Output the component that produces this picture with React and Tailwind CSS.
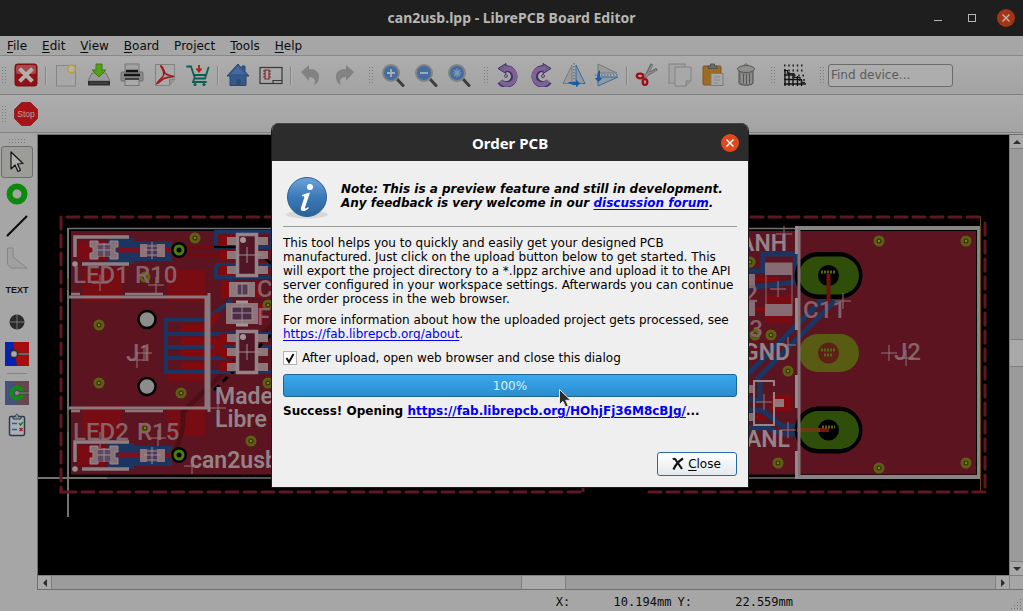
import React from "react";

/* ---------- toolbar icons (24 x 24) ---------- */

function Svg({ children, size = "size-6" }) {
  return (
    <svg viewBox="0 0 24 24" className={`${size} shrink-0`} fill="none" aria-hidden="true">
      {children}
    </svg>
  );
}

const icons = {
  close: (
    <>
      <rect x="1" y="1" width="22" height="22" rx="2.5" fill="#8f1015" stroke="#7a0c10" />
      <rect x="2" y="2" width="20" height="9" rx="2" fill="#a5494c" />
      <path d="M7 7l10 10M17 7L7 17" stroke="#b4aeae" strokeWidth="4" strokeLinecap="square" />
    </>
  ),
  create: (
    <>
      <rect x="2.5" y="2.5" width="19" height="20.5" fill="#a8a8a6" stroke="#868686" />
      <circle cx="17.5" cy="6" r="4" fill="#b5b08a" stroke="#b3a13c" strokeWidth="1.5" />
      <circle cx="17.5" cy="6" r="2" fill="#b6b6ae" />
    </>
  ),
  save: (
    <>
      <path d="M5 10h14l4 8H1z" fill="#9b9b9b" stroke="#777" />
      <path d="M1 18h22v4.5H1z" fill="#2c2f30" />
      <path d="M3 20h18" stroke="#4a4d4e" />
      <path d="M9 1h6v6h4l-7 7-7-7h4z" fill="#55a018" stroke="#3d7d10" />
    </>
  ),
  print: (
    <>
      <rect x="5" y="1" width="14" height="9" fill="#a3a3a3" stroke="#777" />
      <rect x="1" y="9" width="22" height="9" rx="1" fill="#8a8a8a" stroke="#6c6c6c" />
      <path d="M6 8h12M4 12h16" stroke="#141414" strokeWidth="2.500" />
      <rect x="5" y="15" width="14" height="7.500" fill="#aaa" stroke="#777" />
      <path d="M5 16h14" stroke="#222" strokeWidth="1.5" />
    </>
  ),
  pdf: (
    <>
      <path d="M2.500 1.500h19v15l-5 6h-14z" fill="#a9a9a9" stroke="#808080" />
      <path d="M21.500 16.500h-5v6" fill="#959595" stroke="#808080" />
      <path d="M7.500 2.500c3 2 3 5 4.500 7.500 2 2.500 5 2.500 9 3.500-3 .5-7 .5-10 2s-4 4-7 5c1-3 5-5 6.500-8 1-3-1-7-3-10z" stroke="#a01a1c" strokeWidth="1.600" />
    </>
  ),
  cart: (
    <>
      <path d="M1 3.500h4l4 12h10l3.500-11M8 12h11M8 16l-1 3h13" stroke="#0b5f55" strokeWidth="1.800" strokeLinecap="round" />
      <circle cx="9" cy="21.500" r="1.600" fill="#0b5f55" />
      <circle cx="18" cy="21.500" r="1.600" fill="#0b5f55" />
      <path d="M13 2v6M10.500 5.500L13 8.500l2.500-3" stroke="#a12313" strokeWidth="1.800" />
    </>
  ),
  home: (
    <>
      <path d="M12 1L1 13h3v9.500h16V13h3l-4-4.500V3h-3v2.500z" fill="#35598a" stroke="#27486f" />
      <path d="M12 3L5 11h14z" fill="#44699b" />
      <path d="M10.500 16h4v6.500h-4z" fill="#2b4c78" />
    </>
  ),
  board: (
    <>
      <rect x="1" y="4.500" width="22" height="16" stroke="#383838" strokeWidth="1.200" />
      <path d="M14 20.500v-3h9" stroke="#383838" strokeWidth="1.200" />
      <path d="M6 7h4v9H6zM4 8h2M4 11h2M4 14h2M10 8h2M10 11h2M10 14h2" stroke="#7c2b2b" strokeWidth="1.200" />
    </>
  ),
  undo: <path d="M2 9l8-7v4c7 0 10 3 10 8 0 4-2 7-5 8 2-4 1-8-5-8v4z" fill="#828282" />,
  redo: <path d="M22 9l-8-7v4C7 6 4 9 4 14c0 4 2 7 5 8-2-4-1-8 5-8v4z" fill="#828282" />,
  rotateLeft: (
    <>
      <path d="M9 5.500a8 8 0 1 1-5 13" stroke="#3f3162" strokeWidth="6.500" />
      <path d="M2 5.500L10 .5v10z" fill="#6f6188" stroke="#3f3162" />
      <path d="M8 5.500h2a8 8 0 1 1-5.300 12.700" stroke="#7a6894" strokeWidth="4.500" />
      <path d="M9 5.500a8 8 0 1 1-4.500 12.500" stroke="#9a45a4" strokeWidth="1.200" strokeDasharray="1 1.500" />
      <circle cx="10" cy="13" r="1.500" fill="#a6a6a6" stroke="#5a3a7a" />
    </>
  ),
  rotateRight: (
    <>
      <path d="M15 5.500a8 8 0 1 0 5 13" stroke="#3f3162" strokeWidth="6.500" />
      <path d="M22 5.500L14 .5v10z" fill="#6f6188" stroke="#3f3162" />
      <path d="M16 5.500h-2a8 8 0 1 0 5.300 12.700" stroke="#7a6894" strokeWidth="4.500" />
      <path d="M15 5.500a8 8 0 1 0 4.500 12.500" stroke="#9a45a4" strokeWidth="1.200" strokeDasharray="1 1.500" />
      <circle cx="14" cy="13" r="1.500" fill="#a6a6a6" stroke="#5a3a7a" />
    </>
  ),
  flipH: (
    <>
      <path d="M10 2L1 20.500h9z" fill="#9b9b9b" stroke="#7a7a7a" />
      <path d="M14 2l9 18.500h-9z" fill="#8f9aa4" stroke="#3a6a9c" />
      <path d="M12 0v24" stroke="#2b62a0" strokeDasharray="1.500 1.500" />
      <path d="M6 19h8v-2.500l4 4-4 4V22C10 22 7 21 6 19z" fill="#1e5ba4" />
    </>
  ),
  flipV: (
    <>
      <path d="M3 10V1l19 9z" fill="#9b9b9b" stroke="#7a7a7a" />
      <path d="M3 14v9l20-9z" fill="#8f9aa4" stroke="#3a6a9c" />
      <path d="M0 12h24" stroke="#2b62a0" strokeDasharray="1.500 1.500" />
      <path d="M5 7v8h2.500l-4 4-4-4H2C2 11 3 8 5 7z" fill="#1e5ba4" />
    </>
  ),
  cut: (
    <>
      <path d="M17 1l-7 14M22 6L8 14" stroke="#6a6c6a" strokeWidth="3" />
      <path d="M17 2l-6 12M21 7L9 13" stroke="#979997" />
      <ellipse cx="5" cy="13" rx="3.200" ry="2.300" stroke="#9c1014" strokeWidth="2.300" />
      <ellipse cx="10" cy="19" rx="2.300" ry="2.800" stroke="#9c1014" strokeWidth="2.300" />
    </>
  ),
  copy: (
    <>
      <rect x="1" y="1" width="16" height="19" fill="#a4a4a4" stroke="#828282" />
      <path d="M7 4h16v14l-5 5H7z" fill="#a8a8a8" stroke="#828282" />
      <path d="M23 18h-5v5" fill="#989898" stroke="#808080" />
    </>
  ),
  paste: (
    <>
      <rect x="2" y="3" width="18" height="19" rx="1" fill="#9d6c22" stroke="#80571a" />
      <path d="M7 5.500V3h2.500V1h4v2H16v2.500z" fill="#686a68" stroke="#555" />
      <path d="M10 10.500h12v12H10z" fill="#a6a6a4" stroke="#7c7c7c" />
      <path d="M13 14h6M13 17h6M13 20h4" stroke="#888" />
    </>
  ),
  trash: (
    <>
      <path d="M5 7h14v13c0 3-14 3-14 0z" fill="#7b7c7a" stroke="#535452" />
      <ellipse cx="12" cy="6" rx="8.500" ry="3.500" fill="#8f908e" stroke="#5b5c5a" />
      <path d="M10 2.500c0-2 4-2 4 0" stroke="#5b5c5a" />
      <path d="M8 11v9M11 12v9M14 12v9M17 11v9" stroke="#a0a19f" />
      <path d="M9.500 11v9M12.500 12v9M15.500 11v9" stroke="#565755" />
    </>
  ),
  grid: (
    <>
      <path d="M1 2.500h21M1 7.500h21M11 12.500h11M16 17h6" stroke="#1e1e1e" strokeWidth="1.800" strokeDasharray="1.500 2.750" />
      <path d="M1 7.500h3.500v3H11v4h6v2h1.500v3H22" stroke="#161616" strokeWidth="1.200" />
      <path d="M2 6v17M6 9v14M10 11v12M14.500 13v10M18.500 17v6M1 12h9M1 16.500h15M1 21h22" stroke="#141414" strokeWidth="1.400" />
    </>
  ),
  stop: (
    <>
      <path d="M7.500 .5h9l7 7v9l-7 7h-9l-7-7v-9z" fill="#a81317" stroke="#8a2a2c" />
      <text x="12" y="15" textAnchor="middle" fontSize="8.500" fill="#b9a3a3" fontFamily="Liberation Sans, sans-serif">Stop</text>
    </>
  ),
};

function Lens({ kind }) {
  return (
    <>
      <path d="M16 16l6 6.500" stroke="#3c3e3c" strokeWidth="3" strokeLinecap="round" />
      <circle cx="10" cy="10" r="8" fill="#446c9f" stroke="#828482" strokeWidth="2" />
      {kind === "in" && <path d="M10 6v8M6 10h8" stroke="#a6b0bb" strokeWidth="1.800" />}
      {kind === "out" && <path d="M6 10h8" stroke="#a6b0bb" strokeWidth="1.800" />}
      {kind === "fit" && <path d="M10 5.500v9M5.500 10h9M7 7l6 6M13 7l-6 6" stroke="#7f99b8" strokeWidth="1.200" />}
    </>
  );
}
icons.zoomIn = <Lens kind="in" />;
icons.zoomOut = <Lens kind="out" />;
icons.zoomFit = <Lens kind="fit" />;

const sideIcons = {
  select: <path d="M6 2v17l4-4 3 6.500 2.500-1.200-3-6.300 5.500-.5z" fill="#b0b0b0" stroke="#141414" strokeWidth="1.200" strokeLinejoin="round" />,
  pad: <circle cx="12" cy="12" r="7.500" stroke="#0d8a0d" strokeWidth="6" />,
  line: <path d="M2.500 21.500L21.500 2.500" stroke="#0a0a0a" strokeWidth="2" strokeLinecap="round" />,
  polygon: <path d="M2.500 2h5.500v9l14 11H6l-3.500-4z" fill="#a0a0a0" stroke="#868686" />,
  text: (
    <text x="12" y="15" textAnchor="middle" fontSize="9" fontWeight="700" fill="#151515" fontFamily="Liberation Sans, sans-serif">TEXT</text>
  ),
  hole: (
    <>
      <circle cx="12" cy="12" r="7.500" fill="#2b2b2b" />
      <path d="M12 4v16M4 12h16" stroke="#777" />
    </>
  ),
  plane: (
    <>
      <path d="M0 0h24v24H0z" fill="#a60d0d" />
      <path d="M0 0h8l4 24H0z" fill="#0822b0" />
      <path d="M12 12h12" stroke="#333" strokeWidth="2.500" />
      <path d="M12 12h12" stroke="#999" />
      <circle cx="9" cy="12" r="4" fill="#6c6c6c" stroke="#222" />
      <circle cx="9" cy="12" r="2.500" fill="#a9a9a9" />
    </>
  ),
  ratsnest: (
    <>
      <path d="M0 0h24v24H0z" fill="#65484f" />
      <path d="M0 0h9l3 24H0z" fill="#46507c" />
      <circle cx="12" cy="12" r="5.500" stroke="#128a16" strokeWidth="4" />
      <path d="M12 12h12" stroke="#333" strokeWidth="2.500" />
      <path d="M12 12h12" stroke="#999" />
      <circle cx="12" cy="12" r="2" fill="#8c8c8c" />
    </>
  ),
  check: (
    <>
      <rect x="4.500" y="3.500" width="15" height="19" rx="1.500" fill="#acb0b2" stroke="#2c3a48" strokeWidth="1.500" />
      <path d="M8 3.500h2.500c0-3 3-3 3 0H16v2.500H8z" fill="#8a8f94" stroke="#2c3a48" />
      <path d="M7 10.500h5M7 16.500h5" stroke="#1c62a8" strokeWidth="1.500" />
      <path d="M14 10l1.500 2 2.500-3" stroke="#1f7d2e" strokeWidth="1.400" />
      <path d="M14.500 15l3 3M17.500 15l-3 3" stroke="#a01a2c" strokeWidth="1.400" />
    </>
  ),
};

/* ---------- small pieces ---------- */

function Handle() {
  return (
    <svg viewBox="0 0 9 18" className="h-[18px] w-[9px] shrink-0" aria-hidden="true">
      <path d="M2.500 1v17M5.500 1v17" stroke="#7a7a7a" strokeDasharray="1 2" />
    </svg>
  );
}

function Divider() {
  return (
    <div className="flex w-[7px] shrink-0 justify-center">
      <div className="h-[19px] w-px bg-[#858585]" />
      <div className="h-[19px] w-px bg-[#b4b4b4]" />
    </div>
  );
}

function Tool({ icon, label, disabled }) {
  return (
    <button type="button" aria-label={label} disabled={disabled} className="flex h-9 w-[33px] shrink-0 items-center justify-center">
      <Svg>{icons[icon]}</Svg>
    </button>
  );
}

const menus = [
  ["F", "ile"],
  ["E", "dit"],
  ["V", "iew"],
  ["B", "oard"],
  ["", "Project"],
  ["T", "ools"],
  ["H", "elp"],
];

function CloseCross({ tone }) {
  return (
    <svg viewBox="0 0 18 18" className="size-[18px]" aria-hidden="true">
      <circle cx="9" cy="9" r="9" className={tone === "dim" ? "fill-[#a33414]" : "fill-[#e2481d]"} />
      <path d="M5.500 5.500l7 7M12.500 5.500l-7 7" className={tone === "dim" ? "stroke-[#bcb0ac]" : "stroke-white"} strokeWidth="1.500" />
    </svg>
  );
}

/* ---------- board drawing ---------- */

const vias = [
  [195, 238], [99, 325], [99, 383], [145, 277], [145, 428], [181, 393], [251, 441], [268, 305], [268, 383],
  [879, 241], [966, 241], [755, 335], [771, 335], [788, 371], [778, 463], [879, 468], [966, 463], [750, 262],
];
const crosses = [
  [100, 283], [156, 285], [137, 360], [144, 353], [218, 408], [192, 466], [158, 438], [100, 440], [784, 234],
  [843, 301], [778, 289], [788, 345], [889, 353], [906, 358], [788, 430], [764, 402],
];

function Silk({ x, y, bold, anchor, children }) {
  return (
    <text
      x={x}
      y={y}
      fontSize={bold ? 23 : 24}
      fontWeight={bold ? 600 : 500}
      textAnchor={anchor || "start"}
      fill={bold ? "#938388" : "#876068"}
      fontFamily="Roboto, sans-serif"
    >
      {children}
    </text>
  );
}

function LedRow({ dy }) {
  return (
    <g transform={`translate(0 ${dy})`}>
      <rect x="78" y="241" width="32" height="19" fill="#7a0b12" />
      <path d="M108 238h26v3h38v20h-38v3h-26z" fill="#1c3560" />
      <path d="M118 250h24M165 250h10" stroke="#7c1020" strokeWidth="5" />
      <path d="M90 241h8v3h12v-3h8v6h-3v6h3v6h-8v-3H98v3h-8v-6h3v-6h-3z" fill="#857277" stroke="#9b888c" />
      <path d="M98 245h12v11H98z" fill="#5d4a60" />
      <path d="M140 244h25v13h-25z" fill="#8e7478" />
      <path d="M147 244h10v13h-10z" fill="#4b3a5b" />
      <path d="M147 246h10M147 255h10M152 242v17M144 250h17M104 243v14M97 250h14" stroke="#9d8d92" />
      <path d="M75 257v-20h54M82 264h47" stroke="#8f7f83" strokeWidth="3.500" fill="none" />
      <circle cx="75" cy="264" r="2.800" fill="#9c8d90" />
      <circle cx="179" cy="250" r="8" fill="#000" />
      <circle cx="179" cy="250" r="4" fill="none" stroke="#4d7c12" strokeWidth="3" />
    </g>
  );
}

function Sot({ y }) {
  return (
    <g transform={`translate(0 ${y})`}>
      {[8, 22, 37].map((p) => (
        <g key={p}>
          <rect x="220" y={p - 5} width="15" height="10" fill="#84090d" />
          <rect x="227" y={p - 4} width="10" height="8" fill="#8d7679" />
          <rect x="257" y={p - 4} width="11" height="8" fill="#8d7679" />
        </g>
      ))}
      <rect x="237.500" y="1.500" width="19" height="41" fill="#511626" stroke="#968389" strokeWidth="3.500" />
      <path d="M247 14v16M238 22h24" stroke="#9b8b8f" />
      <circle cx="243" cy="7" r="3" fill="#a19497" />
    </g>
  );
}

function BoardCanvas() {
  return (
    <svg
      viewBox="38 135 971 440"
      preserveAspectRatio="xMidYMid slice"
      className="absolute inset-0 h-full w-full"
      role="img"
      aria-label="Board layout"
      fill="none"
    >
      <rect x="71" y="231" width="905" height="243.500" fill="#5c1520" />

      {/* copper: left half */}
      <g fill="#770c12">
        <rect x="83" y="270" width="39" height="31" />
        <rect x="167" y="270" width="38" height="31" />
        <rect x="83" y="406" width="39" height="30" />
        <rect x="167" y="406" width="38" height="30" />
        <rect x="168" y="374" width="37" height="7" />
      </g>
      <path d="M175 456l8-30v-14l80-78M183 412l90-88" stroke="#4c0f18" strokeWidth="5" />
      <path d="M187 248h50M187 255h50" stroke="#6f0c13" strokeWidth="4" />
      <path d="M214 247h58M214 232h58v16M216 248v-14M216 265v12h56M216 265h56M232 278l-2 24-26 18h-38v52h106M166 334h60M166 347h106M166 358h60M226 334h46" stroke="#1c3560" strokeWidth="4" />
      <path d="M184 328h22l10-12M184 341h30M184 353h30l8-12M184 366h22" stroke="#84090d" strokeWidth="7" strokeLinecap="round" />
      <path d="M214 247h24M244 240l30 26" stroke="#000" strokeWidth="2.500" />
      <path d="M214 390l60-58" stroke="#000" strokeWidth="3" strokeDasharray="7 5" />

      {/* parts next to the dialog's left edge */}
      <rect x="221" y="281" width="40" height="17" fill="#84090d" />
      <rect x="229" y="282" width="26" height="15" fill="#8f787c" />
      <rect x="237" y="284" width="11" height="11" fill="#563b54" stroke="#9b8b8f" />
      <rect x="226" y="303" width="38" height="21" fill="#84090d" />
      <path d="M226 303h32v21h-32z" fill="#8d7579" />
      <path d="M232 307h20v13h-20z" fill="#4d2c48" stroke="#9b8b8f" />
      <path d="M236 302h12M236 325h12" stroke="#a39499" strokeWidth="3" />
      <path d="M242 304v19M232 313h20M242 282v15" stroke="#9b8b8f" />
      <Sot y={233} />
      <Sot y={330} />

      <LedRow dy={0} />
      <LedRow dy={205} />

      {/* J1 outline */}
      <path d="M68 297h138v111H68M209 293v119" stroke="#8c777c" strokeWidth="3" />
      <path d="M71 294h9M125 294h38M71 411h9M125 411h38" stroke="#8c777c" strokeWidth="2.500" />
      {[319.5, 386.5].map((y) => (
        <circle key={y} cx="147" cy={y} r="8.500" fill="#8c8c8c" stroke="#000" strokeWidth="2.500" />
      ))}

      {/* copper: right half */}
      <path d="M748 271h15v-17h33v30M748 288l48-6M748 374l48-48 28-28M756 380l80-80M760 380v20h-12M748 410h14l20 16h20M748 428h20l14 6h18" stroke="#1c3560" strokeWidth="5" />
      <rect x="765" y="295" width="27" height="28" fill="#780c12" />
      <path d="M748 279h30M748 309h17M748 418h18" stroke="#84090d" strokeWidth="4" />
      <rect x="771" y="395" width="20" height="16" fill="#84090d" />
      <rect x="774" y="399" width="10" height="8" fill="#94757a" />
      <rect x="766" y="263" width="26" height="52" stroke="#8a6a72" />
      <rect x="765" y="263" width="27" height="12" fill="#876c73" />
      <rect x="765" y="304" width="27" height="12" fill="#876c73" />
      <rect x="748" y="274" width="7" height="14" fill="#876c73" />
      <rect x="748" y="302" width="7" height="14" fill="#876c73" />
      <rect x="748" y="385" width="6" height="8" fill="#876c73" />
      <rect x="748" y="413" width="6" height="8" fill="#876c73" />
      <path d="M774 386v-5h-20v44h20v-33" stroke="#958589" strokeWidth="2" />

      {/* J2 pads */}
      {[275.5, 430].map((y) => (
        <g key={y}>
          <rect x="794.500" y={y - 23.5} width="68" height="47" rx="23.500" fill="#000" />
          <rect x="799" y={y - 19} width="60" height="38" rx="19" fill="#2f4e09" />
          <circle cx="828.500" cy={y} r="10.500" fill="#000" />
        </g>
      ))}
      <rect x="799" y="334" width="60" height="38" rx="19" fill="#575c12" />
      <circle cx="828.500" cy="353" r="10.500" fill="#5c2018" />
      <path d="M828.500 274v27" stroke="#6f1410" strokeWidth="4" />
      <path d="M797 430h32" stroke="#6a3a12" strokeWidth="4" />
      <path d="M820 430h9" stroke="#7a1010" strokeWidth="4" />
      <path d="M821 272h15M821 350h15M824 355h9M822 427h13" stroke="#53690f" strokeWidth="3" strokeDasharray="2 1" />

      {/* vias */}
      {vias.map(([x, y]) => (
        <g key={`${x}-${y}`}>
          <circle cx={x} cy={y} r="4" fill="#47290f" stroke="#5c6012" strokeWidth="3" />
          <circle cx={x} cy={y} r="1.200" fill="#758a12" />
        </g>
      ))}

      {/* silkscreen texts */}
      <Silk x={73} y={283}>LED1</Silk>
      <Silk x={135} y={283}>R10</Silk>
      <Silk x={73} y={440}>LED2</Silk>
      <Silk x={137} y={440}>R15</Silk>
      <Silk x={126} y={361}>J1</Silk>
      <Silk x={257} y={297}>C</Silk>
      <Silk x={257} y={325}>F</Silk>
      <Silk x={803} y={318}>C11</Silk>
      <Silk x={894} y={360}>J2</Silk>
      <Silk x={758} y={302} anchor="end">2</Silk>
      <Silk x={763} y={337} anchor="end">3</Silk>
      <Silk x={215} y={404} bold>Made</Silk>
      <Silk x={215} y={427} bold>Libre</Silk>
      <Silk x={190} y={468} bold>can2usb</Silk>
      <Silk x={787} y={251} anchor="end" bold>ANH</Silk>
      <Silk x={790} y={360} anchor="end" bold>GND</Silk>
      <Silk x={790} y={447} anchor="end" bold>ANL</Silk>

      {/* origin crosses */}
      {crosses.map(([x, y]) => (
        <path key={`${x}-${y}`} d={`M${x - 8} ${y}h16M${x} ${y - 8}v16`} stroke="#8f7479" />
      ))}

      {/* board outline, origin lines */}
      <path d="M69 228.500h911M978.500 226v252M107 478h873" stroke="#6f6f6f" strokeWidth="1.500" />
      <path d="M68 228v289M38 478h69" stroke="#727272" strokeWidth="2" />
      <path d="M796 228h183v249H796" stroke="#858585" strokeWidth="4" />
      <path d="M799 229v247" stroke="#867278" strokeWidth="3" />
      <path d="M796.500 226v28M796.500 298v32M796.500 375v33M796.500 451v28" stroke="#938a8d" strokeWidth="3" />
      <path d="M68 278v12M68 410v22M980.500 216v275" stroke="#6a4310" />

      {/* clearance outline */}
      <g stroke="#5f1722" strokeWidth="3" strokeLinecap="round" strokeDasharray="12 6">
        <path d="M67 217h918" />
        <path d="M61 217v275" />
        <path d="M985 223v269" />
        <path d="M64 492h519" />
        <path d="M649 492h336" />
      </g>
      <path d="M583 492v-5M61 488v4h4" stroke="#5f1722" strokeWidth="3" />
    </svg>
  );
}

/* ---------- scroll bars ---------- */

function Arrow({ d, label }) {
  return (
    <button type="button" aria-label={label} className="flex size-[13px] shrink-0 items-center justify-center bg-[#a9a9a9]">
      <svg viewBox="0 0 8 8" className="size-2" aria-hidden="true">
        <path d={d} fill="#2e2e2e" />
      </svg>
    </button>
  );
}

/* ---------- dialog ---------- */

function OrderDialog() {
  return (
    <div className="fixed inset-0 flex items-start justify-center pt-[123px] pr-[3px]">
      <section
        role="dialog"
        aria-labelledby="order-title"
        className="relative w-[478px] overflow-hidden rounded-t-lg border border-t-0 border-[#1b1b1b] bg-[#efefef] text-black"
      >
        <header className="grid h-[38px] grid-cols-[1fr_auto_1fr] items-center border-t border-[#444] bg-[#2c2c2c] px-[9px]">
          <h2 id="order-title" className="col-start-2 font-['Noto_Sans',sans-serif] text-[15px] font-bold text-white">
            Order PCB
          </h2>
          <button type="button" aria-label="Close dialog" className="justify-self-end">
            <CloseCross />
          </button>
        </header>

        <div className="px-[11px] pb-[11px] leading-[14px]">
          <div className="flex h-[66px] items-center gap-3 border-b border-[#9a9a9a] pt-1">
            <svg viewBox="0 0 46 46" className="size-[46px] shrink-0" aria-hidden="true">
              <defs>
                <linearGradient id="info" x1="0" y1="0" x2="0" y2="1">
                  <stop offset="0" stopColor="#6ea3dc" />
                  <stop offset="0.5" stopColor="#3b7ab8" />
                  <stop offset="1" stopColor="#2b6296" />
                </linearGradient>
              </defs>
              <ellipse cx="24" cy="41.500" rx="21" ry="4" fill="#d8d8d8" />
              <g transform="translate(0 2)">
                <circle cx="24" cy="22" r="19.500" fill="url(#info)" stroke="#2f6295" />
                <circle cx="27" cy="12" r="3" fill="#fff" />
                <path d="M19 20c3-1 5.500-2 8-2.500l-5 15c-.3 1.500.8 1.500 3-.5l.8.900c-4 4.500-9 4-7.800-.4l3.300-10c.4-1.300-.5-1.500-2.300-1.300z" fill="#fff" />
              </g>
            </svg>
            <p className="font-bold italic">
              Note: This is a preview feature and still in development.
              <br />
              Any feedback is very welcome in our{" "}
              <a href="#forum" className="text-[#0000ee] underline underline-offset-2">
                discussion forum
              </a>
              .
            </p>
          </div>

          <p className="mt-2 border-t border-transparent">
            This tool helps you to quickly and easily get your designed PCB manufactured. Just click on the upload button below to get
            started. This will export the project directory to a *.lppz archive and upload it to the API server configured in your
            workspace settings. Afterwards you can continue the order process in the web browser.
          </p>
          <p className="mt-[7px]">
            For more information about how the uploaded project gets processed, see{" "}
            <a href="#about" className="text-[#0000ee] underline underline-offset-2">
              https://fab.librepcb.org/about
            </a>
            .
          </p>

          <label className="mt-[10px] flex items-center gap-[5px]">
            <span className="grid size-[14px] place-items-center">
              <input
                type="checkbox"
                defaultChecked
                className="peer col-start-1 row-start-1 size-[14px] appearance-none border border-[#b4b4b4] bg-white"
              />
              <svg
                viewBox="0 0 14 14"
                className="pointer-events-none invisible col-start-1 row-start-1 size-[14px] peer-checked:visible"
                fill="none"
                aria-hidden="true"
              >
                <path d="M3.500 7l2.500 4 4.500-8" stroke="#111" strokeWidth="2" />
              </svg>
            </span>
            After upload, open web browser and close this dialog
          </label>

          <div
            role="progressbar"
            aria-label="Upload"
            aria-valuenow={100}
            aria-valuemin={0}
            aria-valuemax={100}
            className="mt-[9px] flex h-[23px] items-center justify-center rounded-[3px] border border-[#1f638f] bg-linear-to-b from-[#3aa8f0] to-[#2b8dcd] text-[#dff0fb]"
          >
            100%
          </div>

          <p className="mt-[7px] font-bold">
            Success! Opening{" "}
            <a href="#order" className="text-[#0000ee] underline underline-offset-2">
              https://fab.librepcb.org/HOhjFj36M8cBJg/
            </a>
            ...
          </p>

          <div className="mt-[34px] flex justify-end">
            <button
              type="button"
              className="flex h-6 w-20 items-center justify-center gap-[3px] rounded-[3px] border border-[#2a6a9c] bg-linear-to-b from-white to-[#e4eaee] pr-[2px]"
            >
              <svg viewBox="0 0 14 14" className="size-[14px]" fill="none" aria-hidden="true">
                <path d="M2 2.500c1-1.200 2.500-.5 3.500 1.500l5.500 8M12 1.500C8 4 4 9 2.500 12.500" stroke="#161616" strokeWidth="2.200" />
              </svg>
              <span>
                <u className="underline-offset-2">C</u>lose
              </span>
            </button>
          </div>
        </div>

        {/* mouse pointer */}
        <svg viewBox="0 0 12 19" className="pointer-events-none absolute top-[266px] left-[287px] h-[19px] w-3" aria-hidden="true">
          <path d="M.5 .5v15l3.500-3.200 2.500 5.700 2.700-1.200-2.500-5.500h5z" fill="#2b2b2b" stroke="#e6e6e6" />
        </svg>
      </section>
    </div>
  );
}

/* ---------- window ---------- */

export default function App() {
  return (
    <div className="flex h-screen flex-col overflow-hidden bg-[#a6a6a6] font-['DejaVu_Sans',sans-serif] text-xs text-[#0c0c0c]">
      <header className="grid h-9 shrink-0 grid-cols-[1fr_auto_1fr] items-center bg-[#1e1e1e] px-2">
        <h1 className="col-start-2 font-['Noto_Sans',sans-serif] text-sm font-bold text-[#b6b6b2]">can2usb.lpp - LibrePCB Board Editor</h1>
        <div className="flex items-center gap-4 justify-self-end">
          <button type="button" aria-label="Minimize" className="flex h-[18px] w-[18px] items-end justify-center pb-[6px]">
            <span className="h-px w-2 bg-[#b6b6b2]" />
          </button>
          <button type="button" aria-label="Maximize" className="flex size-[18px] items-center justify-center">
            <span className="size-2 border border-[#b6b6b2]" />
          </button>
          <button type="button" aria-label="Close window">
            <CloseCross tone="dim" />
          </button>
        </div>
      </header>

      <nav className="flex h-5 shrink-0 items-center gap-px border-b border-[#888] text-[#0c0c0c]" aria-label="Menu">
        {menus.map(([key, rest]) => (
          <button key={rest} type="button" className="px-[7px]">
            {key && <u className="underline-offset-2">{key}</u>}
            {rest}
          </button>
        ))}
      </nav>

      <div className="flex h-[39px] shrink-0 items-center gap-[7px] border-b border-[#808080] bg-linear-to-b from-[#adadad] to-[#a3a3a3]">
        <div className="flex items-center">
          <Handle />
          <Tool icon="close" label="Close board" />
          <Divider />
          <Tool icon="create" label="New" />
          <Tool icon="save" label="Save" />
          <Tool icon="print" label="Print" />
          <Tool icon="pdf" label="Export PDF" />
          <Tool icon="cart" label="Order" />
          <Divider />
          <Tool icon="home" label="Control panel" />
          <Tool icon="board" label="Schematic" />
          <Divider />
          <Tool icon="undo" label="Undo" disabled />
          <Tool icon="redo" label="Redo" disabled />
        </div>
        <div className="flex items-center">
          <Handle />
          <Tool icon="zoomIn" label="Zoom in" />
          <Tool icon="zoomOut" label="Zoom out" />
          <Tool icon="zoomFit" label="Zoom to fit" />
        </div>
        <div className="flex items-center">
          <Handle />
          <Tool icon="rotateLeft" label="Rotate left" />
          <Tool icon="rotateRight" label="Rotate right" />
          <Tool icon="flipH" label="Flip horizontally" />
          <Tool icon="flipV" label="Flip vertically" />
          <Divider />
          <Tool icon="cut" label="Cut" />
          <Tool icon="copy" label="Copy" />
          <Tool icon="paste" label="Paste" />
          <Tool icon="trash" label="Delete" />
        </div>
        <div className="flex items-center">
          <Handle />
          <Tool icon="grid" label="Grid" />
        </div>
        <div className="flex items-center gap-px">
          <Handle />
          <input
            type="text"
            aria-label="Find device"
            placeholder="Find device..."
            className="h-[23px] w-[125px] rounded-[3px] border border-[#6c6c6c] bg-[#adadad] px-[2px] placeholder:text-[#5c5c5c]"
          />
        </div>
      </div>

      <div className="flex h-[38px] shrink-0 items-center border-b border-[#808080] bg-linear-to-b from-[#adadad] to-[#a3a3a3]">
        <Handle />
        <Tool icon="stop" label="Stop" />
      </div>

      <div className="flex min-h-0 flex-1 pt-px">
        <aside className="flex w-[37px] shrink-0 flex-col pt-1 pl-px">
          <svg viewBox="0 0 18 8" className="ml-2 h-2 w-[18px] shrink-0" aria-hidden="true">
            <path d="M0 1.500h18M0 4.500h18" stroke="#7a7a7a" strokeDasharray="1 2" />
          </svg>
          {Object.entries(sideIcons).map(([name, icon]) => (
            <React.Fragment key={name}>
              {name === "ratsnest" && <div className="my-[3px] ml-[6px] h-px w-5 shrink-0 bg-[#858585]" />}
              <button
                type="button"
                aria-label={name}
                className={
                  name === "select"
                    ? "flex h-8 w-8 shrink-0 items-center justify-center rounded-[3px] border border-[#6c6c6c] bg-[#9c9c99]"
                    : "flex h-8 w-8 shrink-0 items-center justify-center"
                }
              >
                <Svg>{icon}</Svg>
              </button>
            </React.Fragment>
          ))}
        </aside>

        <div className="grid min-w-0 flex-1 grid-cols-[1fr_14px] grid-rows-[1fr_14px] border-t border-b border-l border-[#6f6f6f]">
          <div className="relative overflow-hidden bg-black">
            <BoardCanvas />
          </div>
          <div className="flex flex-col border-l border-[#808080] bg-[#9a9a9a]">
            <Arrow label="Scroll up" d="M0 6l4-4 4 4z" />
            <div className="min-h-0 flex-[190] border-t border-[#808080]" />
            <div className="min-h-0 flex-[27] border-y border-[#808080] bg-[#a9a9a9]" />
            <div className="min-h-0 flex-[194] border-b border-[#808080]" />
            <Arrow label="Scroll down" d="M0 2l4 4 4-4z" />
          </div>
          <div className="flex border-t border-[#808080] bg-[#9c9c9c]">
            <Arrow label="Scroll left" d="M6 0L2 4l4 4z" />
            <div className="flex-[470] border-l border-[#808080]" />
            <div className="flex-[43] border-x border-[#808080] bg-[#aaa]" />
            <div className="flex-[430] border-r border-[#808080]" />
            <Arrow label="Scroll right" d="M2 0l4 4-4 4z" />
          </div>
          <div className="border-t border-l border-[#808080]" />
        </div>
      </div>

      <footer className="flex h-[21px] shrink-0 items-center font-['DejaVu_Sans_Mono',monospace]">
        <div className="ml-auto flex gap-[6px] pt-[3px] pr-[215px] whitespace-pre">
          <span>X:      10.194mm</span>
          <span>Y:      22.559mm</span>
        </div>
        <svg viewBox="0 0 15 15" className="size-[15px] self-end" aria-hidden="true">
          <path d="M12 3.500h2M9 6.500h5M6 9.500h8M3 12.500h11" stroke="#777" strokeDasharray="1 2" />
        </svg>
      </footer>

      <OrderDialog />
    </div>
  );
}
